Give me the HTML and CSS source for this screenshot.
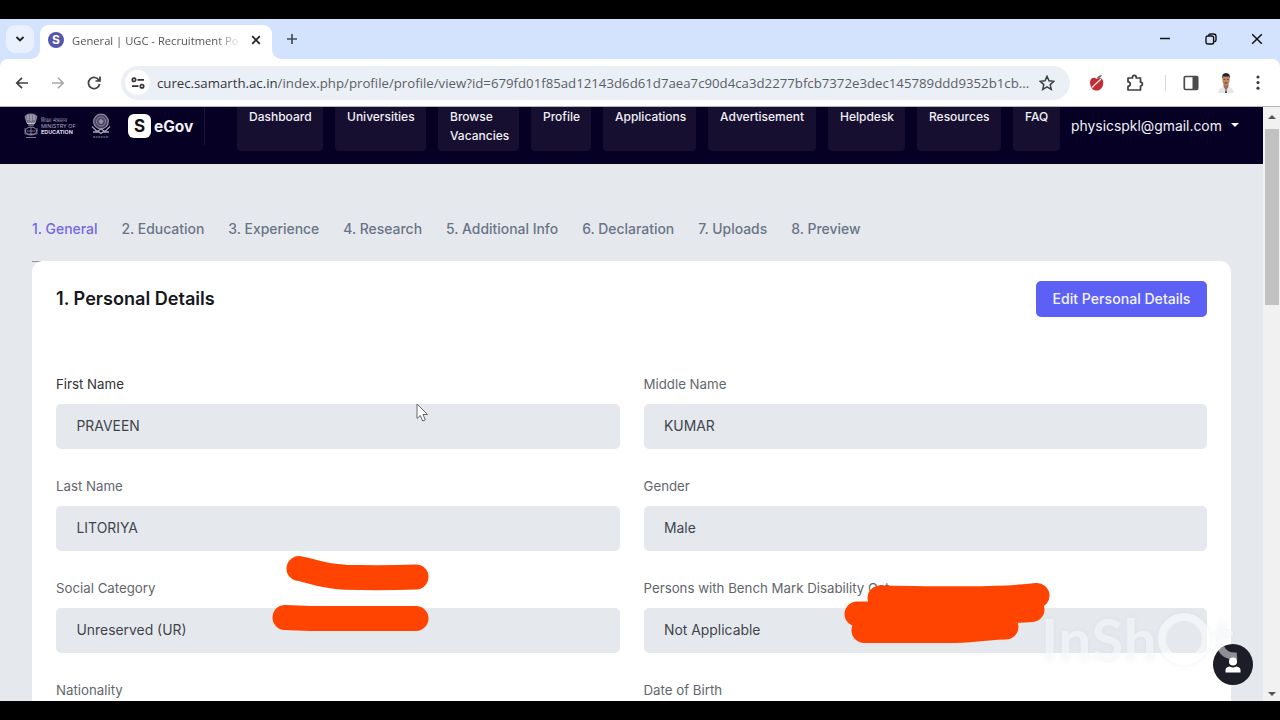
FILE: index.html
```
<!DOCTYPE html>
<html lang="en">
<head>
    <meta charset="UTF-8">
    <meta name="viewport" content="width=device-width, initial-scale=1.0">
    <title>General | UGC - Recruitment Portal</title>
    <link rel="stylesheet" href="styles.css">
</head>
<body>
    <div class="browser">
        <!-- Tab strip -->
        <div class="tab-strip">
            <button class="tab-search">
                <svg width="10" height="6" viewBox="0 0 10 6"><path d="M1.5 1 5 4.400 8.500 1" fill="none" stroke="#222" stroke-width="1.900"/></svg>
            </button>
            <div class="tab">
                <span class="favicon">S</span>
                <span class="tab-title">General | UGC - Recruitment Po</span>
                <svg width="10" height="10" viewBox="0 0 10 10"><path d="M1.200 1.200 8.800 8.800M8.800 1.200 1.200 8.800" stroke="#222" stroke-width="1.700"/></svg>
            </div>
            <svg class="new-tab" width="12" height="12" viewBox="0 0 12 12"><path d="M6 1v10M1 6h10" stroke="#444c57" stroke-width="1.700"/></svg>
            <div class="window-buttons">
                <svg width="12" height="12" viewBox="0 0 12 12"><path d="M1 5.500h10" stroke="#111" stroke-width="1.500"/></svg>
                <svg width="12" height="12" viewBox="0 0 12 12" fill="none" stroke="#111" stroke-width="1.400"><rect x="1" y="3" width="7.600" height="8" rx="1.800"/><path d="M3.500 2.800Q3.800 1 5.500 1H8.500Q11 1 11 3.500V7Q11 8.500 9.200 8.800"/></svg>
                <svg width="12" height="12" viewBox="0 0 12 12"><path d="M1.200 1.200 10.800 10.800M10.800 1.200 1.200 10.800" stroke="#111" stroke-width="1.500"/></svg>
            </div>
        </div>

        <!-- Address bar -->
        <div class="toolbar">
            <svg class="nav-icon" width="14" height="14" viewBox="0 0 14 14" fill="none" stroke="#3c4043" stroke-width="1.700"><path d="M13 7H2M7 1.800 1.800 7 7 12.200"/></svg>
            <svg class="nav-icon" width="14" height="14" viewBox="0 0 14 14" fill="none" stroke="#a5a7aa" stroke-width="1.600"><path d="M1 7H12M7 1.800 12.200 7 7 12.200"/></svg>
            <svg class="nav-icon" width="14" height="14" viewBox="0 0 14 14" fill="none" stroke="#3c4043" stroke-width="1.700"><path d="M12 4.400A5.600 5.600 0 1 0 12.600 8M13 .5V5H8.500"/></svg>
            <div class="omnibox">
                <span class="site-info">
                    <svg width="14" height="12" viewBox="0 0 14 12" fill="none" stroke="#333" stroke-width="1.700"><circle cx="3" cy="2.800" r="1.700"/><path d="M6.500 2.800H13M1 9.200H7.500"/><circle cx="11" cy="9.200" r="1.700"/></svg>
                </span>
                <span class="url"><b>curec.samarth.ac.in</b>/index.php/profile/profile/view?id=679fd01f85ad12143d6d61d7aea7c90d4ca3d2277bfcb7372e3dec145789ddd9352b1cb...</span>
                <svg width="16" height="16" viewBox="0 0 16 16"><path d="M8 1.300 10 5.800 14.900 6.300 11.200 9.600 12.300 14.400 8 11.900 3.700 14.400 4.800 9.600 1.100 6.300 6 5.800Z" fill="none" stroke="#3c4043" stroke-width="1.500"/></svg>
            </div>
            <div class="extensions">
                <svg width="16" height="18" viewBox="0 0 16 18"><path d="M7.500 5C5 2.500 1 4 1 8.500 1 13 4 17 7 16.400 11 17.500 14.500 13 14.300 8.500 14.200 4 10 3 7.500 5Z" fill="#c52d35"/><path d="M7.500 5Q9 1 13 1 12 4.500 7.500 5Z" fill="#777"/><path d="M3 13.500 12 5" stroke="#eee" stroke-width="1.200"/></svg>
                <svg width="18" height="18" viewBox="0 0 18 18"><path d="M2 4H6.500V3.200A1.800 1.800 0 0 1 10.200 3.200V4H14.500V8.200A1.900 1.900 0 0 1 14.500 12V16H2V12.300A2.200 2.200 0 0 0 2 7.800Z" fill="none" stroke="#3c4043" stroke-width="1.700" stroke-linejoin="round"/></svg>
                <i class="divider"></i>
                <svg width="16" height="16" viewBox="0 0 16 16"><rect x="1.300" y="1.500" width="13.400" height="13" rx="1.300" fill="none" stroke="#4a4b4d" stroke-width="1.700"/><path d="M9.500 2H14.500V14H9.500Z" fill="#4a4b4d"/></svg>
                <svg width="18" height="22" viewBox="0 0 18 22"><path d="M1 21Q2 16 6 15L9 17 12 15Q16 16 17 21Z" fill="#e6e6e9"/><path d="M6.500 12H11.500V15L9 18 6.500 15Z" fill="#a46f50"/><ellipse cx="9" cy="8" rx="3.600" ry="5.600" fill="#bd8763"/><path d="M5 7Q4.500 1 9 1 13.500 1 13 7L12 4.500H6Z" fill="#252022"/><path d="M6.500 7.500H8M10 7.500H11.500M7.500 11H10.500" stroke="#654032"/><path d="M9 16 10 21H8Z" fill="#333a45"/></svg>
                <svg width="4" height="16" viewBox="0 0 4 16" fill="#3c4043"><circle cx="2" cy="2" r="1.600"/><circle cx="2" cy="7.600" r="1.600"/><circle cx="2" cy="13.200" r="1.600"/></svg>
            </div>
        </div>

        <!-- Page -->
        <div class="viewport">
            <div class="page">
                <header class="site-header">
                    <div class="logos">
                        <svg class="emblem" width="14" height="26" viewBox="0 0 14 26" fill="none" stroke="#9791aa"><path d="M1 3.500Q3 .5 7 1 11 .5 13 3.500L11 10H3Z" fill="#777087"/><path d="M4 2V7M7 2V8M10 2V7M3 10.500H11M4 12H10" stroke="#c0bbc9"/><ellipse cx="7" cy="18" rx="5.500" ry="4"/><path d="M1 15V21H13V15M7 14V22M3 18H11M2 24.500H12" stroke-width=".8"/></svg>
                        <div class="ministry"><span>शिक्षा मंत्रालय</span><span>MINISTRY OF</span><strong>EDUCATION</strong></div>
                        <svg class="ugc" width="20" height="26" viewBox="0 0 20 26" fill="none" stroke="#8e87a0"><circle cx="10" cy="8.500" r="7.300" fill="#4a4262" stroke-width="1.300"/><circle cx="10" cy="8.500" r="4.500"/><circle cx="10" cy="8.500" r="2" fill="#9690a5"/><path d="M1 13.500 6 18.500 10 16 14 18.500 19 13.500M2 19H8L10 20.500 12 19H18" stroke="#aaa4b8" stroke-width="1.300"/><path d="M2 24H18" stroke="#8e87a0" stroke-dasharray="2 .6"/></svg>
                        <span class="s-mark">S</span>
                        <span class="egov">eGov</span>
                    </div>
                    <nav class="main-nav">
                        <a>Dashboard</a>
                        <a>Universities</a>
                        <a>Browse<br>Vacancies</a>
                        <a>Profile</a>
                        <a>Applications</a>
                        <a>Advertisement</a>
                        <a>Helpdesk</a>
                        <a>Resources</a>
                        <a>FAQ</a>
                    </nav>
                    <div class="account">physicspkl@gmail.com<i class="caret"></i></div>
                </header>

                <nav class="steps">
                    <a class="active">1. General</a>
                    <a>2. Education</a>
                    <a>3. Experience</a>
                    <a>4. Research</a>
                    <a>5. Additional Info</a>
                    <a>6. Declaration</a>
                    <a>7. Uploads</a>
                    <a>8. Preview</a>
                </nav>

                <div class="card-wrap">
                    <section class="card">
                        <div class="card-header">
                            <h2>1. Personal Details</h2>
                            <button class="edit-button">Edit Personal Details</button>
                        </div>
                        <div class="details">
                            <div class="field"><label class="dark">First Name</label><div class="value">PRAVEEN</div></div>
                            <div class="field"><label>Middle Name</label><div class="value">KUMAR</div></div>
                            <div class="field"><label>Last Name</label><div class="value">LITORIYA</div></div>
                            <div class="field"><label>Gender</label><div class="value">Male</div></div>
                            <div class="field"><label>Social Category</label><div class="value">Unreserved (UR)</div></div>
                            <div class="field"><label>Persons with Bench Mark Disability Cat</label><div class="value">Not Applicable</div></div>
                            <div class="field"><label>Nationality</label></div>
                            <div class="field"><label>Date of Birth</label></div>
                        </div>
                    </section>
                </div>
            </div>
            <div class="scrollbar">
                <i class="arrow-up"></i>
                <div class="thumb"></div>
                <i class="arrow-down"></i>
            </div>
        </div>
    </div>

    <!-- Floating help button -->
    <div class="help-button">
        <svg width="16" height="16" viewBox="0 0 16 16" fill="#fff"><circle cx="8" cy="4.500" r="4"/><path d="M.5 15.500V13Q.5 10 4.500 9.500 8 11.500 11.500 9.500 15.500 10 15.500 13V15.500Z"/></svg>
        <svg class="glare" width="40" height="41" viewBox="0 0 40 41"><path d="M8 4Q12 13 24 12" fill="none" stroke="#fff" stroke-opacity=".5" stroke-width="7"/></svg>
    </div>

    <div class="watermark">InSh<span class="ring"></span>t</div>

    <!-- Marker strokes -->
    <svg class="marker" width="1280" height="720" viewBox="0 0 1280 720" fill="none" stroke="#ff4301" stroke-width="25" stroke-linecap="round" stroke-linejoin="round">
        <path d="M299 568.500C309 570 320 576 345 577.300C370 578 390 578 416 577"/>
        <path d="M285 617.500 310 618.500H416"/>
        <path d="M880 598C940 599 1000 600 1037 595.500M857 614H950L1032 609.500M864 630.500H955C980 630 990 627 1006 627"/>
    </svg>

    <svg class="cursor" width="14" height="20" viewBox="0 0 14 20"><path d="M1 1V15.500L4.300 12.500 6.700 18 9.300 16.900 7 11.500H11.500Z" fill="#fff" stroke="#66676b" stroke-width="1"/></svg>
</body>
</html>
```
FILE: styles.css
```
/* Color Palette */
:root {
    --tab-strip: #d4e3fd;
    --header-bg: #060024;
    --header-item: #170f30;
    --page-bg: #e5e9ee;
    --accent-color: #5c60f5;
}

* {
    box-sizing: border-box;
}

body {
    margin: 0;
    height: 720px;
    padding: 19px 0;
    background: #000;
    font-family: 'Inter', sans-serif;
    overflow: hidden;
}

.browser {
    height: 682px;
    display: flex;
    flex-direction: column;
    background: var(--tab-strip);
    overflow: hidden;
}

/* Tab strip */
.tab-strip {
    height: 40px;
    display: flex;
    align-items: center;
    padding-left: 6px;
}

.tab-search {
    width: 28px;
    height: 28px;
    padding: 0;
    border: none;
    border-radius: 9px;
    background: #e9f1fe;
    display: flex;
    align-items: center;
    justify-content: center;
}

.tab {
    position: relative;
    align-self: flex-end;
    width: 232px;
    height: 34px;
    margin-left: 6px;
    padding: 0 11px 5px 8px;
    display: flex;
    align-items: center;
    background: #fff;
    border-radius: 9px 9px 0 0;
}

.tab::before,
.tab::after {
    content: "";
    position: absolute;
    bottom: 0;
    width: 9px;
    height: 9px;
}

.tab::before {
    left: -9px;
    background: radial-gradient(circle at 0 0, transparent 8.5px, #fff 9px);
}

.tab::after {
    right: -9px;
    background: radial-gradient(circle at 100% 0, transparent 8.5px, #fff 9px);
}

.favicon {
    width: 16px;
    height: 16px;
    border-radius: 50%;
    background: #5656a8;
    color: #fff;
    font-size: 12px;
    font-weight: 700;
    line-height: 16px;
    text-align: center;
}

.tab-title {
    width: 169px;
    margin: 2px 10px 0 8px;
    flex-shrink: 0;
    white-space: nowrap;
    font-family: 'Open Sans', sans-serif;
    font-size: 11.2px;
    color: #555;
    -webkit-mask-image: linear-gradient(90deg, #000 85%, transparent);
    mask-image: linear-gradient(90deg, #000 85%, transparent);
}

.new-tab {
    margin-left: 14px;
}

.window-buttons {
    margin-left: auto;
    padding-right: 17px;
    display: flex;
    gap: 34px;
}

/* Toolbar */
.toolbar {
    height: 48px;
    flex-shrink: 0;
    display: flex;
    align-items: center;
    padding: 0 20px 0 15px;
    background: #fff;
    border-radius: 8px 8px 0 0;
    border-bottom: 1px solid #b5b6bf;
}

.nav-icon {
    margin-right: 22px;
}

.omnibox {
    width: 949px;
    height: 34px;
    margin-left: -2px;
    padding: 0 15px 0 4px;
    display: flex;
    align-items: center;
    background: #ebeff6;
    border-radius: 17px;
}

.omnibox svg {
    flex-shrink: 0;
}

.site-info {
    width: 25px;
    height: 25px;
    flex-shrink: 0;
    border-radius: 50%;
    background: #fff;
    display: flex;
    align-items: center;
    justify-content: center;
}

.url {
    flex: 1;
    min-width: 0;
    margin-left: 7px;
    font-family: 'Open Sans', sans-serif;
    font-size: 13.23px;
    white-space: nowrap;
    color: #5c6066;
}

.url b {
    font-weight: 400;
    color: #35383c;
}

.extensions {
    flex: 1;
    display: flex;
    align-items: center;
    justify-content: space-between;
    padding-left: 19px;
}

.extensions svg:nth-of-type(3) {
    margin: 0 -3px;
}

.divider {
    width: 1px;
    height: 16px;
    background: #d4dae4;
}

/* Page */
.viewport {
    flex: 1;
    min-height: 0;
    display: flex;
    background: #f1f1f1;
}

.page {
    width: 1263px;
    background: var(--page-bg);
    overflow: hidden;
}

.site-header {
    height: 57px;
    display: flex;
    background: var(--header-bg);
    color: #f1f0f6;
}

.logos {
    width: 205px;
    height: 38px;
    padding-left: 24px;
    display: flex;
    align-items: center;
    border-right: 1px solid #1c1538;
}

.ministry {
    width: 34px;
    margin-left: 3px;
    display: flex;
    flex-direction: column;
    font-size: 5.4px;
    line-height: 6px;
    white-space: nowrap;
    color: #b0abc0;
}

.ministry strong {
    color: #dddae4;
}

.ugc {
    margin-left: 16px;
}

.s-mark {
    width: 23px;
    height: 24px;
    margin-left: 17px;
    border-radius: 6px;
    background: #fff;
    color: #111;
    font-size: 17px;
    font-weight: 700;
    line-height: 24px;
    text-align: center;
}

.egov {
    margin-left: 3px;
    font-size: 15.5px;
    font-weight: 700;
}

.main-nav {
    margin-left: 32px;
    height: 44px;
    display: grid;
    grid-template-columns: 86px 91px 81px 60px 93px 108px 77px 84px 47px;
    column-gap: 12px;
}

.main-nav a {
    padding-left: 12px;
    background: var(--header-item);
    border-radius: 0 0 4px 4px;
    font-size: 12px;
    font-weight: 500;
    line-height: 19px;
    white-space: nowrap;
}

.account {
    margin-left: 11px;
    height: 38px;
    display: flex;
    align-items: center;
    font-size: 13.9px;
}

.caret {
    margin: -3px 0 0 9px;
    border: 4.5px solid transparent;
    border-top-color: #fff;
    border-bottom: 0;
}

/* Step tabs */
.steps {
    height: 97px;
    padding: 55px 0 0 32px;
    display: flex;
    gap: 24px;
    font-size: 13.93px;
    font-weight: 500;
    line-height: 20px;
    color: #6b7486;
    white-space: nowrap;
}

.steps .active {
    color: #7268e6;
}

.card-wrap {
    width: 1199px;
    margin-left: 32px;
    background: linear-gradient(#8d92a0, #8d92a0) 0 0 / 9px 1px no-repeat;
}

.card {
    padding: 20px 24px;
    background: #fff;
    border-radius: 11px;
}

.card-header {
    height: 36px;
    margin-bottom: 57px;
    display: flex;
    align-items: center;
    justify-content: space-between;
}

h2 {
    margin: 0 0 2px;
    font-size: 18.1px;
    font-weight: 600;
    color: #16181d;
}

.edit-button {
    width: 171px;
    height: 36px;
    padding: 0 0 1px;
    border: none;
    border-radius: 5px;
    background: var(--accent-color);
    color: #f4f3ff;
    font: 500 14.1px 'Inter', sans-serif;
}

/* Details form */
.details {
    display: grid;
    grid-template-columns: 1fr 1fr;
    gap: 27.6px 24px;
}

.field label {
    display: block;
    margin-bottom: 10px;
    font-size: 13.27px;
    line-height: 20px;
    color: #62666c;
}

.field label.dark {
    color: #303236;
}

.value {
    height: 44.5px;
    padding-left: 20.5px;
    border-radius: 5px;
    background: var(--page-bg);
    font-size: 13.9px;
    line-height: 45px;
    color: #41454b;
}

/* Scrollbar */
.scrollbar {
    flex: 1;
    display: flex;
    flex-direction: column;
    align-items: center;
    padding: 8px 0 5px;
}

.thumb {
    width: 14px;
    height: 176px;
    margin-top: 10px;
    background: #c1c1c1;
}

.arrow-up,
.arrow-down {
    border: 4px solid transparent;
}

.arrow-up {
    border-top: 0;
    border-bottom-color: #555;
}

.arrow-down {
    margin-top: auto;
    border-bottom: 0;
    border-top-color: #555;
}

/* Overlays */
.help-button {
    position: absolute;
    left: 1213px;
    top: 644px;
    width: 40px;
    height: 41px;
    border-radius: 50%;
    background: #1d1d28;
    display: flex;
    align-items: center;
    justify-content: center;
    overflow: hidden;
    z-index: 2;
}

.glare {
    position: absolute;
    left: 0;
    top: 0;
}

.watermark {
    position: absolute;
    left: 1041px;
    top: 609px;
    display: flex;
    align-items: center;
    font-family: 'Lato', sans-serif;
    font-size: 58px;
    font-weight: 700;
    line-height: 60px;
    letter-spacing: 0.8px;
    color: rgba(255, 255, 255, 0.5);
    text-shadow: 0 0 4px rgba(200, 205, 215, 0.3);
}

.ring {
    width: 52px;
    height: 52px;
    margin: 0 2px 0 1px;
    border: 8px solid rgba(255, 255, 255, 0.5);
    border-radius: 50%;
    box-shadow: 0 0 4px rgba(200, 205, 215, 0.3);
}

.marker {
    position: absolute;
    left: 0;
    top: 0;
}

.cursor {
    position: absolute;
    left: 416px;
    top: 403px;
}
```
